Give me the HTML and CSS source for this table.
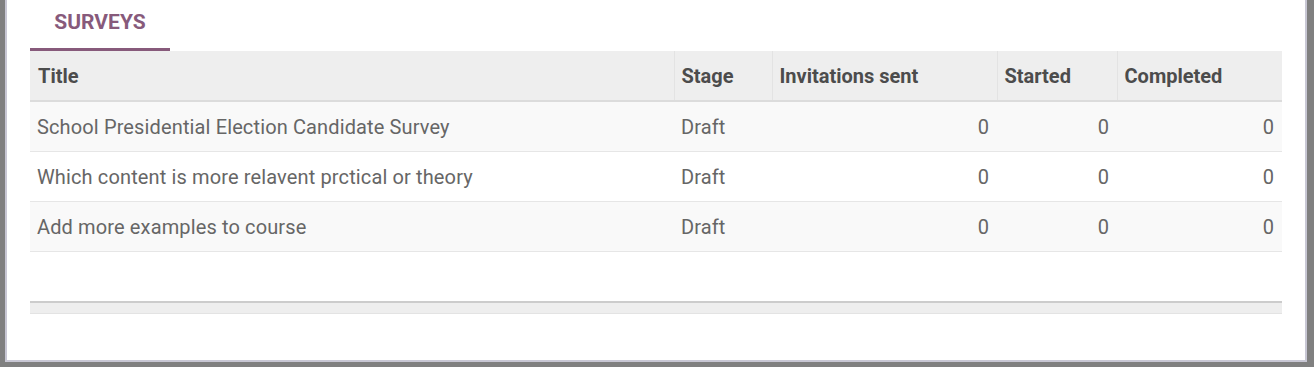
FILE: index.html
```html
<!DOCTYPE html>
<html>
<head>
<meta charset="utf-8">
<link rel="stylesheet" href="styles.css">
</head>
<body>
<div class="panel">
  <div class="tabs">
    <div class="tab active">SURVEYS</div>
  </div>
  <table class="list">
    <colgroup>
      <col class="c-title"><col class="c-stage"><col class="c-inv"><col class="c-started"><col class="c-completed">
    </colgroup>
    <thead>
      <tr><th>Title</th><th>Stage</th><th>Invitations sent</th><th>Started</th><th>Completed</th></tr>
    </thead>
    <tbody>
      <tr><td>School Presidential Election Candidate Survey</td><td>Draft</td><td class="num">0</td><td class="num">0</td><td class="num">0</td></tr>
      <tr><td>Which content is more relavent prctical or theory</td><td>Draft</td><td class="num">0</td><td class="num">0</td><td class="num">0</td></tr>
      <tr><td>Add more examples to course</td><td>Draft</td><td class="num">0</td><td class="num">0</td><td class="num">0</td></tr>
      <tr class="empty"><td colspan="5"></td></tr>
    </tbody>
    <tfoot>
      <tr><td colspan="5"></td></tr>
    </tfoot>
  </table>
</div>
</body>
</html>
```
FILE: styles.css
```css
html, body { margin: 0; padding: 0; }
body {
  background: #808080;
  width: 1314px;
  height: 367px;
  overflow: hidden;
  font-family: Roboto, "Noto Sans", sans-serif;
}
.panel {
  margin-left: 5px;
  height: 360px;
  background: #fff;
  border: 2px solid #c8c7d4;
  border-top: 0;
  padding: 0 23px;
  box-sizing: content-box;
  width: 1252px;
}
.tabs {
  display: flex;
  height: 51px;
}
.tab {
  width: 140px;
  box-sizing: border-box;
  padding-top: 10px;
  text-align: center;
  color: #875a7b;
  font-weight: 700;
  font-size: 21px;
  line-height: 24px;
  border-bottom: 3px solid #875a7b;
  height: 51px;
}
.list {
  width: 1252px;
  border-collapse: collapse;
  table-layout: fixed;
}
.c-title { width: 644px; }
.c-stage { width: 98px; }
.c-inv { width: 225px; }
.c-started { width: 120px; }
.c-completed { width: 165px; }
.list th {
  background: #eeeeee;
  text-align: left;
  font-weight: 700;
  font-size: 20px;
  color: #4c4c4c;
  height: 49px;
  padding: 0 7px;
  border-left: 1px solid #e3e3e3;
  border-bottom: 2px solid #dcdcdc;
}
.list th:first-child { border-left: 0; padding-left: 8px; }
.list td {
  font-size: 20px;
  letter-spacing: 0.13px;
  color: #666;
  height: 49px;
  padding: 0 7px;
  border-bottom: 1px solid #e6e6e6;
}
.list tbody tr:nth-child(odd) td { background: #f9f9f9; }
.list td.num { text-align: right; padding-right: 8px; }
.list tr.empty td { background: #fff !important; border-bottom: 0; height: 49px; }
.list tfoot td {
  background: #eeeeee;
  height: 10px;
  padding: 0;
  border-top: 2px solid #cccccc;
  border-bottom: 1px solid #e3e3e3;
}
```
